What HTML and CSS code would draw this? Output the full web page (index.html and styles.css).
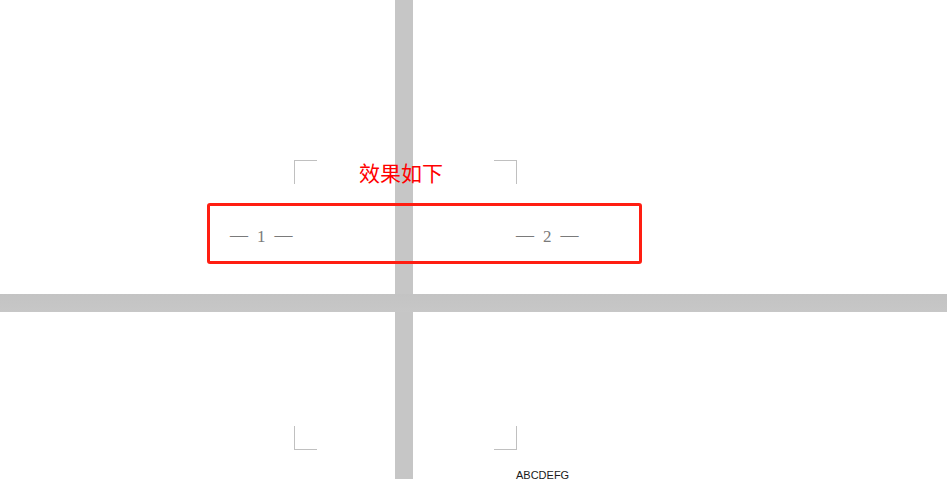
FILE: index.html
```html
<!DOCTYPE html>
<html lang="zh">
<head>
<meta charset="utf-8">
<title>页码效果</title>
<link rel="stylesheet" href="styles.css">
</head>
<body>
<div class="canvas">
  <div class="cell cell-tl">
    <div class="mark mark-tl"></div>
    <div class="pagenum pagenum-1"><span class="dash">—</span><span class="num">1</span><span class="dash">—</span></div>
  </div>
  <div class="vbar"></div>
  <div class="cell cell-tr">
    <div class="mark mark-tr"></div>
    <div class="pagenum pagenum-2"><span class="dash">—</span><span class="num">2</span><span class="dash">—</span></div>
  </div>
  <div class="hbar"></div>
  <div class="cell cell-bl">
    <div class="mark mark-bl"></div>
  </div>
  <div class="cell cell-br">
    <div class="mark mark-br"></div>
    <div class="footer-text">ABCDEFG</div>
  </div>

  <div class="note-title">效果如下</div>
  <div class="note-box"></div>
</div>
</body>
</html>
```

FILE: styles.css
```css
html, body {
  margin: 0;
  padding: 0;
  background: #ffffff;
  overflow: hidden;
}

.canvas {
  position: relative;
  width: 947px;
  height: 479px;
  display: grid;
  grid-template-columns: 395px 18px 1fr;
  grid-template-rows: 294px 18px 1fr;
  background: #ffffff;
}

.vbar {
  grid-column: 2;
  grid-row: 1 / 4;
  background: #c6c6c6;
}

.hbar {
  grid-column: 1 / 4;
  grid-row: 2;
  background: linear-gradient(#c3c3c3, #c7c7c7);
}

.cell {
  display: flex;
  flex-direction: column;
  align-items: flex-start;
  min-width: 0;
}

.cell-tl { grid-column: 1; grid-row: 1; padding-top: 160px; }
.cell-tr { grid-column: 3; grid-row: 1; padding-top: 160px; }
.cell-bl { grid-column: 1; grid-row: 3; padding-top: 114px; }
.cell-br { grid-column: 3; grid-row: 3; padding-top: 114px; }

.mark {
  width: 22px;
  height: 23px;
  border: 0 solid #c0c0c0;
}

.mark-tl { margin-left: 294px; border-top-width: 1px; border-left-width: 1px; }
.mark-tr { margin-left: 81px; border-top-width: 1px; border-right-width: 1px; }
.mark-bl { margin-left: 294px; border-bottom-width: 1px; border-left-width: 1px; }
.mark-br { margin-left: 81px; border-bottom-width: 1px; border-right-width: 1px; }

.pagenum {
  display: flex;
  align-items: center;
  gap: 9px;
  margin-top: 41px;
  font-family: "Liberation Serif", "Noto Sans CJK SC", serif;
  font-size: 17px;
  line-height: 20px;
  color: #7a7a7a;
}

.pagenum-1 { margin-left: 230px; }
.pagenum-2 { margin-left: 103px; }

.dash {
  font-size: 18px;
  line-height: 20px;
  margin-bottom: 4px;
}

.num {
  line-height: 20px;
}

.footer-text {
  margin-left: 103px;
  margin-top: 21px;
  font-family: "Liberation Sans", Arial, sans-serif;
  font-size: 11px;
  line-height: 8px;
  color: #1a1a1a;
}

.note-title {
  position: absolute;
  left: 359px;
  top: 160px;
  font-family: "Noto Sans CJK SC", sans-serif;
  font-size: 21px;
  line-height: 24px;
  color: #ff0000;
  z-index: 2;
}

.note-box {
  position: absolute;
  left: 207px;
  top: 203px;
  width: 429px;
  height: 55px;
  border: 3px solid #ff1e12;
  border-radius: 3px;
  z-index: 2;
}
```
